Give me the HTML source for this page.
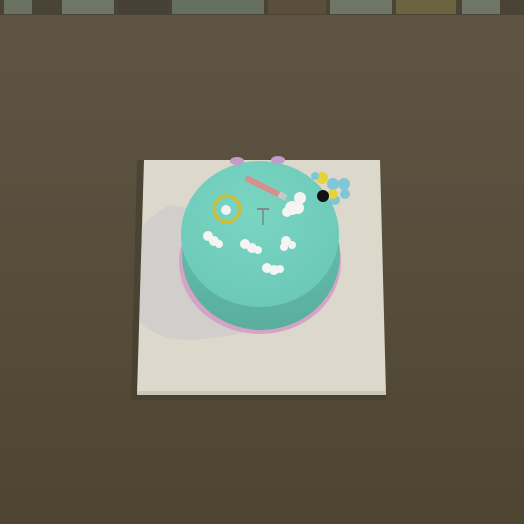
<!DOCTYPE html>
<html><head><style>html,body{margin:0;padding:0;width:524px;height:524px;overflow:hidden;background:#544a38}</style></head>
<body>
<svg width="524" height="524" viewBox="0 0 524 524" xmlns="http://www.w3.org/2000/svg">
<defs>
<linearGradient id="bg" x1="0" y1="0" x2="0" y2="1"><stop offset="0" stop-color="#5e5545"/><stop offset="0.5" stop-color="#574d3b"/><stop offset="1" stop-color="#4e4432"/></linearGradient>
<linearGradient id="side" x1="0" y1="0" x2="0" y2="1"><stop offset="0" stop-color="#66c4b1"/><stop offset="1" stop-color="#5aae9d"/></linearGradient>
<radialGradient id="top" cx="0.45" cy="0.35" r="0.7"><stop offset="0" stop-color="#7ad5c3"/><stop offset="1" stop-color="#6cc8b6"/></radialGradient>
<clipPath id="board"><polygon points="144,160 380,160 386,394 137,394"/></clipPath>
</defs>
<rect width="524" height="524" fill="url(#bg)"/>
<rect x="0" y="0" width="524" height="15" fill="#4a4436"/>
<rect x="4" y="0" width="28" height="14" fill="#6a7262"/>
<rect x="62" y="0" width="52" height="14" fill="#6e7666"/>
<rect x="118" y="0" width="50" height="14" fill="#474036"/>
<rect x="172" y="0" width="92" height="14" fill="#66705f"/>
<rect x="268" y="0" width="58" height="14" fill="#5b4e3a"/>
<rect x="330" y="0" width="62" height="14" fill="#6e7666"/>
<rect x="396" y="0" width="60" height="14" fill="#6a6440"/>
<rect x="462" y="0" width="38" height="14" fill="#6e7666"/>
<!-- board shadow -->
<polygon points="137,160 144,160 137,394 386,394 386,400 131,400" fill="#3e372b" opacity="0.5"/>
<!-- board -->
<polygon points="144,160 380,160 386,394 137,394" fill="#dcd8cc"/>
<rect x="137" y="391" width="249" height="4" fill="#cac6ba"/>
<!-- cake shadow on board -->
<g clip-path="url(#board)">
<path d="M170,205 Q120,230 125,290 Q135,340 190,340 Q270,335 330,300 L310,230 Z" fill="#c9c8ca" opacity="0.6"/>
</g>
<!-- plate -->
<ellipse cx="260" cy="262" rx="81" ry="72" fill="#d6a3c6"/>
<!-- side -->
<ellipse cx="261" cy="255" rx="79" ry="75" fill="url(#side)"/>
<!-- top -->
<ellipse cx="260" cy="234" rx="79" ry="73" fill="url(#top)"/>
<!-- bows -->
<ellipse cx="237" cy="161" rx="7" ry="4" fill="#c79ac8"/>
<ellipse cx="278" cy="160" rx="7" ry="4" fill="#c79ac8"/>
<!-- balloons -->
<circle cx="322" cy="178" r="6" fill="#e6d33a"/>
<circle cx="333" cy="184" r="6" fill="#7fc7d6"/>
<circle cx="344" cy="184" r="6" fill="#7fc7d6"/>
<circle cx="345" cy="194" r="5" fill="#7fc7d6"/>
<circle cx="335" cy="200" r="5" fill="#7fc7d6"/>
<circle cx="333" cy="194" r="5" fill="#e6d33a"/>
<circle cx="323" cy="196" r="6" fill="#111"/>
<circle cx="315" cy="176" r="4" fill="#7fc7d6"/>
<!-- brush -->
<line x1="248" y1="179" x2="278" y2="194" stroke="#d88f8a" stroke-width="6" stroke-linecap="round"/>
<line x1="279" y1="194" x2="286" y2="198" stroke="#c8c8c8" stroke-width="6"/>
<!-- ring -->
<circle cx="227" cy="209" r="13" fill="none" stroke="#d6bb2a" stroke-width="3"/>
<circle cx="226" cy="210" r="5" fill="#f2f2f2"/>
<!-- pin -->
<line x1="263" y1="209" x2="263" y2="225" stroke="#777" stroke-width="1.2"/>
<line x1="257" y1="209" x2="269" y2="209" stroke="#888" stroke-width="2"/>
<!-- clouds -->
<g fill="#f4f4f2">
<circle cx="292" cy="208" r="7"/><circle cx="300" cy="198" r="6"/><circle cx="298" cy="208" r="6"/><circle cx="287" cy="212" r="5"/>
<circle cx="208" cy="236" r="5"/><circle cx="214" cy="241" r="5"/><circle cx="219" cy="244" r="4"/>
<circle cx="245" cy="244" r="5"/><circle cx="252" cy="248" r="5"/><circle cx="258" cy="250" r="4"/>
<circle cx="286" cy="241" r="5"/><circle cx="292" cy="245" r="4"/><circle cx="284" cy="247" r="4"/>
<circle cx="267" cy="268" r="5"/><circle cx="274" cy="270" r="5"/><circle cx="280" cy="269" r="4"/>
</g>
</svg>
</body></html>
